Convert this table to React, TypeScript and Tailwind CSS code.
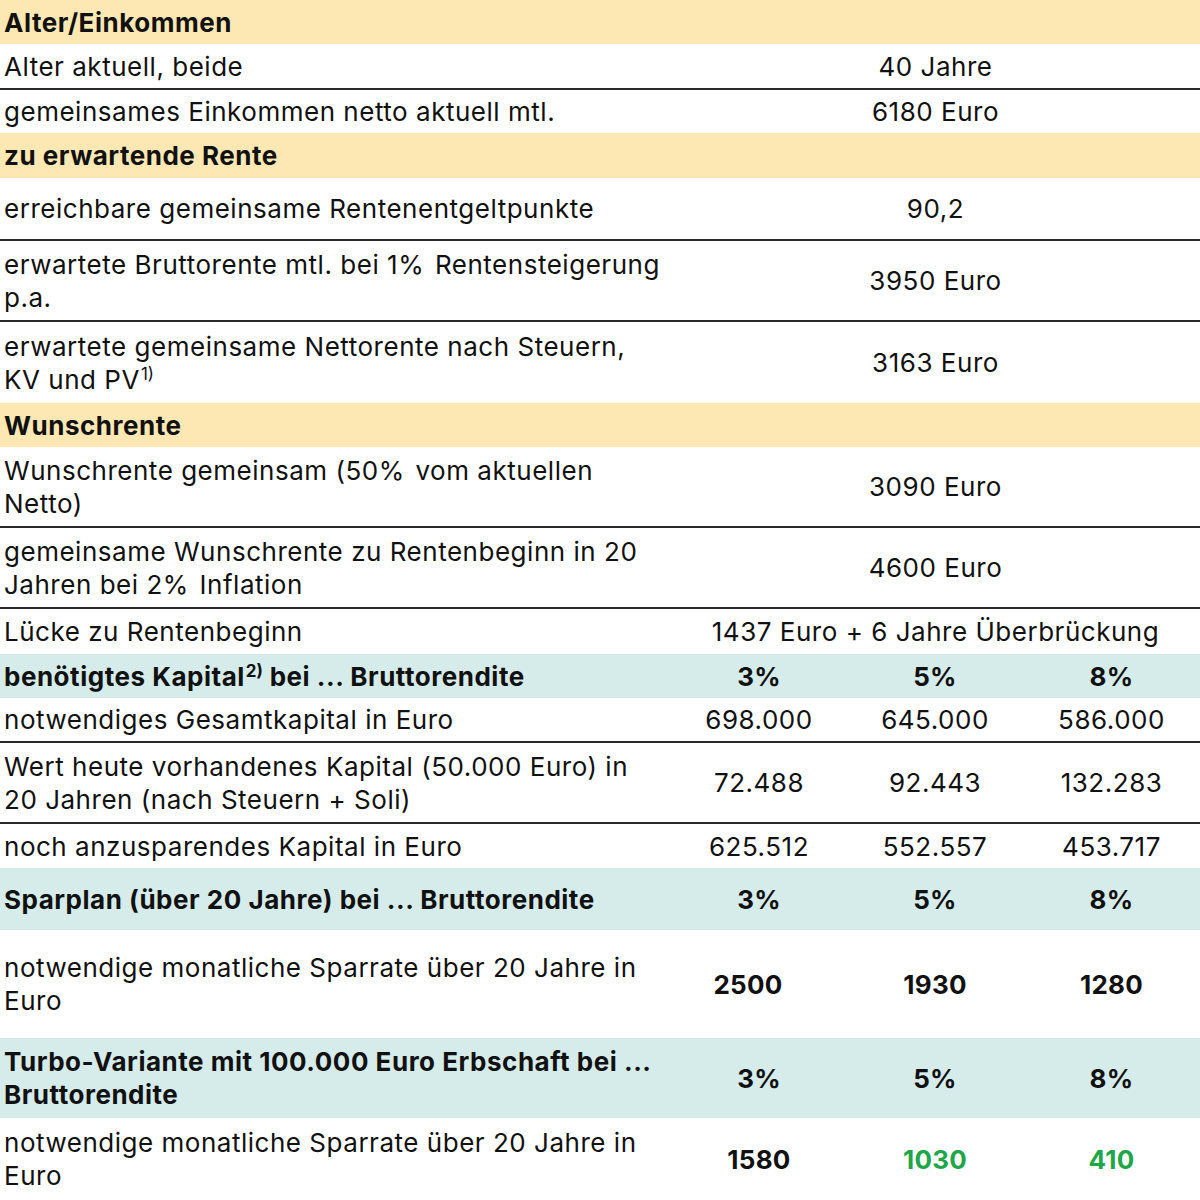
import React from "react";

const FONT = { fontFamily: "Inter, 'Noto Sans', sans-serif" };

type Cell = React.ReactNode;

function Row({
  label,
  values,
  h,
  bg = "",
  border = false,
  bold = false,
  valueBold = false,
  valueClasses = [],
}: {
  label: Cell;
  values: Cell[];
  h: string;
  bg?: string;
  border?: boolean;
  bold?: boolean;
  valueBold?: boolean;
  valueClasses?: string[];
}) {
  return (
    <div
      className={`grid grid-cols-[671px_176px_176px_1fr] items-center ${h} ${bg} ${
        border ? "border-b-2 border-[#2a2a2a]" : ""
      }`}
    >
      <div
        className={`pl-[4px] whitespace-nowrap leading-[33px] ${
          bold ? "font-bold tracking-[0.02em]" : ""
        }`}
      >
        {label}
      </div>
      {values.length === 1 ? (
        <div className={`col-span-3 text-center whitespace-nowrap ${valueBold ? "font-bold" : ""}`}>{values[0]}</div>
      ) : (
        values.map((v, i) => (
          <div
            key={i}
            className={`text-center whitespace-nowrap ${valueBold ? "font-bold tracking-[0.01em]" : ""} ${
              valueClasses[i] ?? ""
            }`}
          >
            {v}
          </div>
        ))
      )}
    </div>
  );
}

const Sup = ({ children }: { children: React.ReactNode }) => (
  <span className="inline-block text-[17px] leading-none relative top-[-9px] ml-[1px] tracking-normal">
    {children}
  </span>
);

const GAP = "\u00a0\u200a";

export default function App() {
  const Y = "bg-[#fde8b3]";
  const T = "bg-[#d6ecea]";
  return (
    <div
      className="w-[1200px] h-[1200px] bg-white text-[#111] text-[26px] tracking-[0.02em] overflow-hidden"
      style={FONT}
    >
      <Row label="Alter/Einkommen" values={[]} h="h-[44px]" bg={Y} bold />
      <Row label="Alter aktuell, beide" values={["40 Jahre"]} h="h-[46px]" border />
      <Row label="gemeinsames Einkommen netto aktuell mtl." values={["6180 Euro"]} h="h-[43px]" />
      <Row label="zu erwartende Rente" values={[]} h="h-[45px]" bg={Y} bold />
      <Row label="erreichbare gemeinsame Rentenentgeltpunkte" values={["90,2"]} h="h-[63px]" border />
      <Row
        label={
          <>
            erwartete Bruttorente mtl. bei 1%{GAP}Rentensteigerung
            <br />
            p.a.
          </>
        }
        values={["3950 Euro"]}
        h="h-[81px]"
        border
      />
      <Row
        label={
          <>
            erwartete gemeinsame Nettorente nach Steuern,
            <br />
            KV und PV<Sup>1)</Sup>
          </>
        }
        values={["3163 Euro"]}
        h="h-[81px]"
      />
      <Row label="Wunschrente" values={[]} h="h-[44px]" bg={Y} bold />
      <Row
        label={
          <>
            Wunschrente gemeinsam (50%{GAP}vom aktuellen
            <br />
            Netto)
          </>
        }
        values={["3090 Euro"]}
        h="h-[81px]"
        border
      />
      <Row
        label={
          <>
            gemeinsame Wunschrente zu Rentenbeginn in 20
            <br />
            Jahren bei 2%{GAP}Inflation
          </>
        }
        values={["4600 Euro"]}
        h="h-[81px]"
        border
      />
      <Row label="Lücke zu Rentenbeginn" values={["1437 Euro + 6 Jahre Überbrückung"]} h="h-[45px]" />
      <Row
        label={
          <>
            benötigtes Kapital<Sup>2)</Sup> bei ... Bruttorendite
          </>
        }
        values={["3%", "5%", "8%"]}
        h="h-[44px]"
        bg={T}
        bold
        valueBold
      />
      <Row
        label="notwendiges Gesamtkapital in Euro"
        values={["698.000", "645.000", "586.000"]}
        h="h-[45px]"
        border
      />
      <Row
        label={
          <>
            Wert heute vorhandenes Kapital (50.000 Euro) in
            <br />
            20 Jahren (nach Steuern + Soli)
          </>
        }
        values={["72.488", "92.443", "132.283"]}
        h="h-[81px]"
        border
      />
      <Row
        label="noch anzusparendes Kapital in Euro"
        values={["625.512", "552.557", "453.717"]}
        h="h-[44px]"
      />
      <Row
        label="Sparplan (über 20 Jahre) bei ... Bruttorendite"
        values={["3%", "5%", "8%"]}
        h="h-[62px]"
        bg={T}
        bold
        valueBold
      />
      <Row
        label={
          <>
            notwendige monatliche Sparrate über 20 Jahre in
            <br />
            Euro
          </>
        }
        values={["2500", "1930", "1280"]}
        h="h-[108px]"
        valueBold
        valueClasses={["pr-[22px]", "", ""]}
      />
      <Row
        label={
          <>
            Turbo-Variante mit 100.000 Euro Erbschaft bei ...
            <br />
            Bruttorendite
          </>
        }
        values={["3%", "5%", "8%"]}
        h="h-[80px]"
        bg={T}
        bold
        valueBold
      />
      <Row
        label={
          <>
            notwendige monatliche Sparrate über 20 Jahre in
            <br />
            Euro
          </>
        }
        values={["1580", "1030", "410"]}
        h="h-[82px]"
        valueBold
        valueClasses={["", "text-[#1fa64b]", "text-[#1fa64b]"]}
      />
    </div>
  );
}
